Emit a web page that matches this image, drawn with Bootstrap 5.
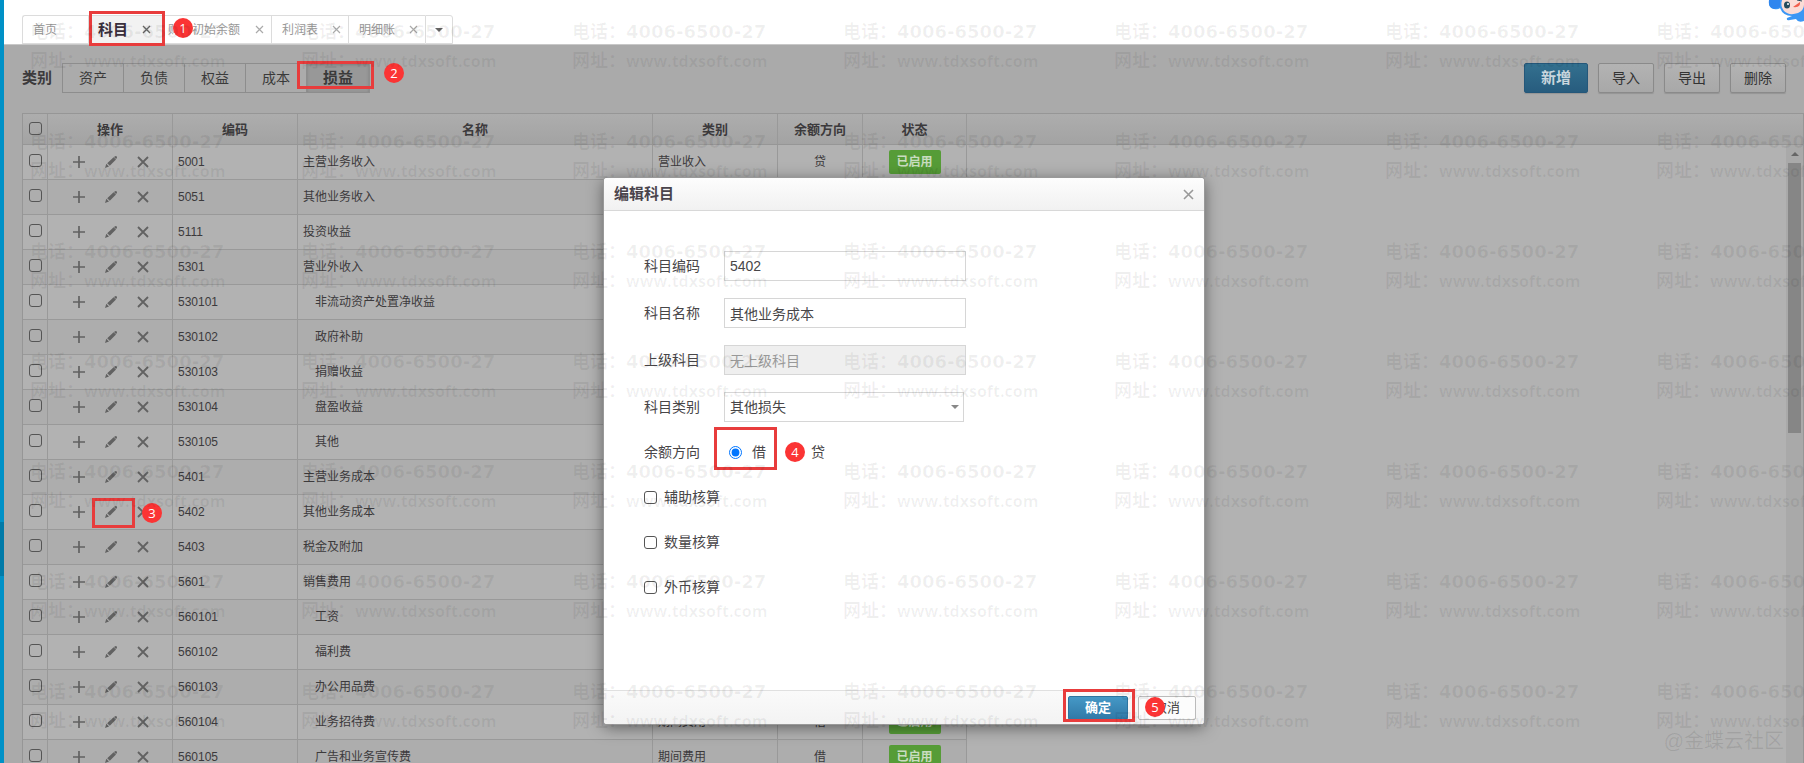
<!DOCTYPE html>
<html lang="zh-CN">
<head>
<meta charset="utf-8">
<meta name="viewport" content="width=device-width, initial-scale=1">
<title>科目</title>
<link href="https://cdn.jsdelivr.net/npm/bootstrap@5.3.0/dist/css/bootstrap.min.css" rel="stylesheet">
<style>
  body { font-family: "Liberation Sans", "Noto Sans CJK SC", sans-serif; font-size: 12px; line-height: 18px; color: #3c3a3c; background: #fff; }
  button { font-family: inherit; }
  .rail { width: 4px; background: #0091c7; }
  .rail-mark { height: 54px; margin-top: 522px; background: #007aa8; }

  /* open pages */
  .pages { height: 45px; padding: 15px 0 0 18px; border-bottom: 1px solid #c8c8c8; }
  .page-tab { padding: 0 7px 0 10px; border: 1px solid #dcdcdc; border-right: 0; color: #999; }
  .page-tab.home { width: 66px; border-top-left-radius: 3px; }
  .page-tab.wide { width: 107px; padding-left: 3px; }
  .page-tab.std { width: 77px; }
  .page-tab.more { width: 28px; padding: 0; border-right: 1px solid #dcdcdc; border-top-right-radius: 3px; }
  .page-tab.current { width: 76px; padding: 0 13px 0 9px; background: #f2f2f2; color: #3a2f3c; font-size: 15px; font-weight: 700; }
  .page-tab a { color: inherit; }
  .plain { padding: 0; border: 0; background: none; color: inherit; line-height: 0; }
  .caret-down { border: 4px solid transparent; border-top-color: #666; border-bottom: 0; }

  /* numbered guide marks */
  .guide { position: absolute; border: 3px solid #e83c3c; pointer-events: none; z-index: 5; }
  .guide-no { position: absolute; width: 20px; height: 20px; border-radius: 50%; background: #fb3434; color: #fff; font: 400 13px/20px "Open Sans", sans-serif; text-align: center; z-index: 6; }

  /* work area, dimmed while the dialog is open */
  .work { background: #aaa; }
  .toolbar { padding: 18px 18px 20px; }
  .kind { font-size: 15px; font-weight: 700; width: 40px; }
  .kind-btn { width: 61px; height: 30px; border: 1px solid #8d8d8d; border-right: 0; border-radius: 0; background: #ababab; color: #3a3a3a; font-size: 14px; padding: 0; }
  .kind-btn.on { width: 64px; border-right: 1px solid #8d8d8d; background: #989898; font-size: 15px; font-weight: 700; box-shadow: inset 0 1px 3px #7c7c7c; }
  .act { width: 56px; height: 30px; padding: 0; border: 1px solid #8a8a8a; border-radius: 2px; background: linear-gradient(#b3b3b3, #a8a8a8); box-shadow: 0 1px 1px #949494; color: #333; font-size: 14px; }
  .act.main { width: 64px; border-color: #24577a; background: linear-gradient(#33708f, #275c7e); color: #c9d6de; font-size: 15px; font-weight: 700; }

  .sheet { margin-left: 18px; border: 1px solid #969696; border-width: 1px 1px 0 1px; background: #b2b2b2; }
  .sheet-head { height: 31px; background: linear-gradient(#adadad, #a3a3a3); border-bottom: 1px solid #969696; }
  .subjects { width: 944px; table-layout: fixed; border-collapse: separate; border-spacing: 0; }
  .subjects th, .subjects td { border-right: 1px solid #999; padding: 0 5px; }
  .subjects th { height: 30px; padding-top: 2px; text-align: center; font-size: 13px; }
  .subjects td { height: 35px; border-bottom: 1px solid #999; }
  .subjects tbody tr:nth-child(even) { background: #adadad; }
  .subjects .ops { padding: 0 0 0 24px; position: relative; color: #626262; }
  .subjects .sub { padding-left: 17px; }
  .box { appearance: none; display: block; width: 13px; height: 13px; margin: 0; border: 1px solid #555; border-radius: 3px; background: transparent; }
  .subjects .box { margin: 0 auto 4px 1px; }
  .subjects .state { display: inline-block; width: 52px; height: 24px; margin-bottom: 1px; line-height: 24px; border-radius: 2px; background: #569c37; color: #c9dcc0; font-size: 12px; font-weight: 700; vertical-align: middle; }
  .scroller { width: 17px; background: #a9a9a9; padding-top: 7px; }
  .arrow-up { border: 4px solid transparent; border-bottom-color: #666; border-top: 0; }
  .thumb { width: 13px; height: 270px; margin-top: 7px; background: #868686; }

  /* dialog */
  .veil { position: absolute; inset: 0; padding-top: 133px; z-index: 10; }
  .dialog { width: 600px; height: 546px; background: #fff; border-radius: 3px; box-shadow: 0 0 0 1px #999, 0 3px 16px rgba(0, 0, 0, .5); color: #484648; }
  .dialog-head { height: 33px; padding: 0 10px; border-bottom: 1px solid #d8d8d8; border-radius: 3px 3px 0 0; background: linear-gradient(#fdfdfd, #f1f1f1); color: #4a444c; }
  .dialog-head h1 { font-size: 15px; line-height: 20px; font-weight: 700; margin: 0; }
  .dialog-foot { height: 34px; padding: 0 8px; gap: 10px; border-top: 1px solid #e0e0e0; border-radius: 0 0 3px 3px; background: linear-gradient(#fafafa, #f3f3f3); }
  .fields { padding: 40px 40px 0; font-size: 14px; line-height: 20px; }
  .field { height: 30px; margin-bottom: 17px; }
  .field.dir-row { height: 26px; margin-bottom: 22px; }
  .field-name { width: 80px; }
  .entry { width: 242px; height: 30px; padding: 0 5px; border: 1px solid #d6d6d6; border-radius: 0; color: #484648; background: #fff; font-size: 14px; outline: 0; }
  .entry:disabled { background: #efefef; color: #999; opacity: 1; }
  select.entry { width: 240px; appearance: none; }
  .pick { position: relative; }
  .pick i { position: absolute; right: 5px; top: 13px; border-top-color: #888; }
  .choice { height: 20px; margin-bottom: 25px; gap: 7px; }
  .dir { position: relative; gap: 10px; padding-left: 5px; }
  .dir input { width: 13px; height: 13px; margin: 0; }
  .dir input + label + input { margin-left: 12px; }
  .dlg-btn { position: relative; width: 58px; height: 24px; padding: 0; border: 1px solid #bbb; border-radius: 2px; background: #fcfcfc; color: #444; font-size: 13px; }
  .dlg-btn.ok { width: 60px; border-color: #2d75a0; background: linear-gradient(#4598c6, #3079a7); color: #fff; font-weight: 700; }

  /* repeated contact mark over the whole window */
  .marks { position: absolute; inset: 0; padding: 18px 0 0 30px; z-index: 20; pointer-events: none; overflow: hidden; color: rgba(0, 0, 0, .06); }
  .mark-grid { display: grid; grid-template-columns: repeat(7, 271px); grid-auto-rows: 110px; }
  .mark-grid p { margin: 0; font: 700 18px/28px "DejaVu Sans", "Noto Sans CJK SC", sans-serif; white-space: nowrap; }
  .mark-grid .site { font-family: "Open Sans", "Noto Sans CJK SC", sans-serif; font-size: 16px; line-height: 29px; }
  .mark-grid span { display: inline-block; width: 54px; font-size: 18px; font-weight: 700; }
  .origin { position: absolute; right: 20px; bottom: 8px; z-index: 21; color: rgba(0, 0, 0, .09); font-size: 20px; line-height: 28px; }
  .mascot { position: absolute; top: 0; right: 0; z-index: 7; }
</style>
</head>
<body>
<div class="d-flex vh-100 overflow-hidden position-relative">
  <div class="rail flex-shrink-0"><div class="rail-mark"></div></div>
  <div class="flex-grow-1 d-flex flex-column overflow-hidden">
    <nav class="pages d-flex flex-shrink-0">
      <div class="page-tab home d-flex align-items-center"><a class="text-decoration-none" href="#">首页</a></div>
      <div class="page-tab current d-flex align-items-center justify-content-between position-relative">
        <a class="text-decoration-none" href="#">科目</a>
        <button class="plain" aria-label="关闭"><svg width="9" height="9" viewBox="0 0 9 9" stroke="#666" stroke-width="1.4"><path d="M1 1l7 7M8 1l-7 7"/></svg></button>
        <span class="guide" style="left:0;top:-5px;width:76px;height:35px"></span>
        <span class="guide-no" style="left:84px;top:2px">1</span>
      </div>
      <div class="page-tab wide d-flex align-items-center justify-content-between"><a class="text-decoration-none" href="#">财务初始余额</a><button class="plain" aria-label="关闭"><svg width="9" height="9" viewBox="0 0 9 9" stroke="#aaa" stroke-width="1.2"><path d="M1 1l7 7M8 1l-7 7"/></svg></button></div>
      <div class="page-tab std d-flex align-items-center justify-content-between"><a class="text-decoration-none" href="#">利润表</a><button class="plain" aria-label="关闭"><svg width="9" height="9" viewBox="0 0 9 9" stroke="#aaa" stroke-width="1.2"><path d="M1 1l7 7M8 1l-7 7"/></svg></button></div>
      <div class="page-tab std d-flex align-items-center justify-content-between"><a class="text-decoration-none" href="#">明细账</a><button class="plain" aria-label="关闭"><svg width="9" height="9" viewBox="0 0 9 9" stroke="#aaa" stroke-width="1.2"><path d="M1 1l7 7M8 1l-7 7"/></svg></button></div>
      <button class="page-tab more bg-white d-flex align-items-center justify-content-center" aria-label="更多"><i class="caret-down"></i></button>
    </nav>

    <main class="work flex-grow-1 d-flex flex-column position-relative overflow-hidden">
      <div class="toolbar d-flex align-items-center flex-shrink-0">
        <span class="kind">类别</span>
        <div class="d-flex position-relative">
          <button class="kind-btn">资产</button><button class="kind-btn">负债</button><button class="kind-btn">权益</button><button class="kind-btn">成本</button><button class="kind-btn on">损益</button>
          <span class="guide" style="left:235px;top:-2px;width:77px;height:28px"></span>
          <span class="guide-no" style="left:322px;top:0">2</span>
        </div>
        <div class="d-flex ms-auto" style="gap:10px">
          <button class="act main">新增</button><button class="act">导入</button><button class="act">导出</button><button class="act">删除</button>
        </div>
      </div>

      <div class="sheet flex-grow-1 overflow-hidden d-flex flex-column">
        <div class="sheet-head flex-shrink-0">
          <table class="subjects">
            <colgroup><col style="width:25px"><col style="width:125px"><col style="width:125px"><col style="width:355px"><col style="width:125px"><col style="width:85px"><col style="width:104px"></colgroup>
            <thead><tr><th><input class="box" type="checkbox" aria-label="全选"></th><th>操作</th><th>编码</th><th>名称</th><th>类别</th><th>余额方向</th><th>状态</th></tr></thead>
          </table>
        </div>
        <div class="d-flex flex-grow-1 overflow-hidden">
          <div class="flex-grow-1 overflow-hidden">
            <table class="subjects">
              <colgroup><col style="width:25px"><col style="width:125px"><col style="width:125px"><col style="width:355px"><col style="width:125px"><col style="width:85px"><col style="width:104px"></colgroup>
              <tbody id="rows"></tbody>
            </table>
          </div>
          <div class="scroller d-flex flex-column align-items-center flex-shrink-0"><i class="arrow-up"></i><div class="thumb flex-shrink-0"></div></div>
        </div>
      </div>

      <div class="veil d-flex justify-content-center align-items-start">
        <form class="dialog d-flex flex-column" role="dialog" aria-labelledby="dlgTitle" onsubmit="return false">
          <div class="dialog-head d-flex align-items-center justify-content-between">
            <h1 id="dlgTitle">编辑科目</h1>
            <button type="button" class="plain" aria-label="关闭"><svg width="11" height="11" viewBox="0 0 11 11" stroke="#999" stroke-width="1.6"><path d="M1 1l9 9M10 1l-9 9"/></svg></button>
          </div>
          <div class="fields flex-grow-1">
            <div class="field d-flex align-items-center"><label class="field-name" for="code">科目编码</label><input class="entry" id="code" value="5402"></div>
            <div class="field d-flex align-items-center"><label class="field-name" for="name">科目名称</label><input class="entry" id="name" value="其他业务成本"></div>
            <div class="field d-flex align-items-center"><label class="field-name" for="parent">上级科目</label><input class="entry" id="parent" value="无上级科目" disabled></div>
            <div class="field d-flex align-items-center"><label class="field-name" for="type">科目类别</label><div class="pick"><select class="entry" id="type"><option>其他损失</option></select><i class="caret-down"></i></div></div>
            <div class="field dir-row d-flex align-items-center">
              <span class="field-name">余额方向</span>
              <div class="dir d-flex align-items-center">
                <input type="radio" name="dir" id="debit" checked><label for="debit">借</label>
                <input type="radio" name="dir" id="credit"><label for="credit">贷</label>
                <span class="guide" style="left:-10px;top:-15px;width:63px;height:43px"></span>
                <span class="guide-no" style="left:61px;top:0">4</span>
              </div>
            </div>
            <div class="choice d-flex align-items-center"><input class="box" type="checkbox" id="aux"><label for="aux">辅助核算</label></div>
            <div class="choice d-flex align-items-center"><input class="box" type="checkbox" id="qty"><label for="qty">数量核算</label></div>
            <div class="choice d-flex align-items-center"><input class="box" type="checkbox" id="fx"><label for="fx">外币核算</label></div>
          </div>
          <div class="dialog-foot d-flex align-items-center justify-content-end">
            <button class="dlg-btn ok">确定<span class="guide" style="left:-6px;top:-8px;width:72px;height:33px"></span></button>
            <button type="button" class="dlg-btn">取消<span class="guide-no" style="left:6px;top:0">5</span></button>
          </div>
        </form>
      </div>
    </main>
  </div>

  <svg class="mascot" width="36" height="24" viewBox="0 0 36 24">
    <path d="M1 0Q0 8 6 9Q10 10 12 8Q15 16 24 16L19 18Q18 21 22 20L28 19Q30 23 36 21V0Z" fill="#3b97f5"/>
    <path d="M1 0Q0 8 6 9L12 7V0Z" fill="#2f86ee"/>
    <path d="M14 0Q12 6 16 11Q21 16 30 13Q36 10 36 5V0Z" fill="#fbdcd6"/>
    <ellipse cx="19" cy="5" rx="3" ry="3.500" fill="#254a5c"/><circle cx="20" cy="4" r="1" fill="#fff"/>
    <path d="M25 7L32 2Q33 8 25 7Z" fill="#f2604d"/>
    <path d="M29 0L34 1" stroke="#254a5c"/>
  </svg>
  <div class="marks" aria-hidden="true"><div class="mark-grid" id="marks"></div></div>
  <div class="origin">@金蝶云社区</div>
</div>

<script src="https://cdn.jsdelivr.net/npm/bootstrap@5.3.0/dist/js/bootstrap.bundle.min.js"></script>
<script>
  const subjects = [
    ['5001', '主营业务收入', '营业收入', '贷'], ['5051', '其他业务收入', '营业收入', '贷'],
    ['5111', '投资收益', '其他收益', '贷'], ['5301', '营业外收入', '其他收益', '贷'],
    ['530101', '非流动资产处置净收益', '其他收益', '贷'], ['530102', '政府补助', '其他收益', '贷'],
    ['530103', '捐赠收益', '其他收益', '贷'], ['530104', '盘盈收益', '其他收益', '贷'],
    ['530105', '其他', '其他收益', '贷'], ['5401', '主营业务成本', '营业成本及税金', '借'],
    ['5402', '其他业务成本', '其他损失', '借'], ['5403', '税金及附加', '营业成本及税金', '借'],
    ['5601', '销售费用', '期间费用', '借'], ['560101', '工资', '期间费用', '借'],
    ['560102', '福利费', '期间费用', '借'], ['560103', '办公用品费', '期间费用', '借'],
    ['560104', '业务招待费', '期间费用', '借'], ['560105', '广告和业务宣传费', '期间费用', '借']
  ];
  const ops = `<div class="d-flex align-items-center" style="gap:18px">
    <button class="plain" aria-label="新增下级"><svg width="14" height="14" viewBox="0 0 14 14" stroke="currentColor" stroke-width="1.7"><path d="M7 1v12M1 7h12"/></svg></button>
    <button class="plain" aria-label="编辑"><svg width="14" height="14" viewBox="0 0 14 14" fill="currentColor"><path d="M10 2L11.500 1Q13.500 1 13 3L12 4ZM9.600 2.200L12 4.500L5.800 10.700L3.200 8.300ZM2.300 8.800L5 11.500L1 13Z"/></svg></button>
    <button class="plain" aria-label="删除"><svg width="14" height="14" viewBox="0 0 14 14" stroke="currentColor" stroke-width="1.8"><path d="M2 2l10 10M12 2l-10 10"/></svg></button></div>`;
  const guide = '<span class="guide" style="left:44px;top:3px;width:43px;height:30px"></span><span class="guide-no" style="left:94px;top:8px">3</span>';
  document.getElementById('rows').innerHTML = subjects.map(([code, name, type, dir]) =>
    `<tr><td><input class="box" type="checkbox" aria-label="${code}"></td><td class="ops">${ops}${code === '5402' ? guide : ''}</td><td>${code}</td>` +
    `<td class="${code.length > 4 ? 'sub' : ''}">${name}</td><td>${type}</td><td class="text-center">${dir}</td><td class="text-center"><span class="state">已启用</span></td></tr>`).join('');
  document.getElementById('marks').innerHTML =
    '<div><p><span>电话：</span>4006-6500-27</p><p class="site"><span>网址：</span>www.tdxsoft.com</p></div>'.repeat(49);
</script>
</body>
</html>
